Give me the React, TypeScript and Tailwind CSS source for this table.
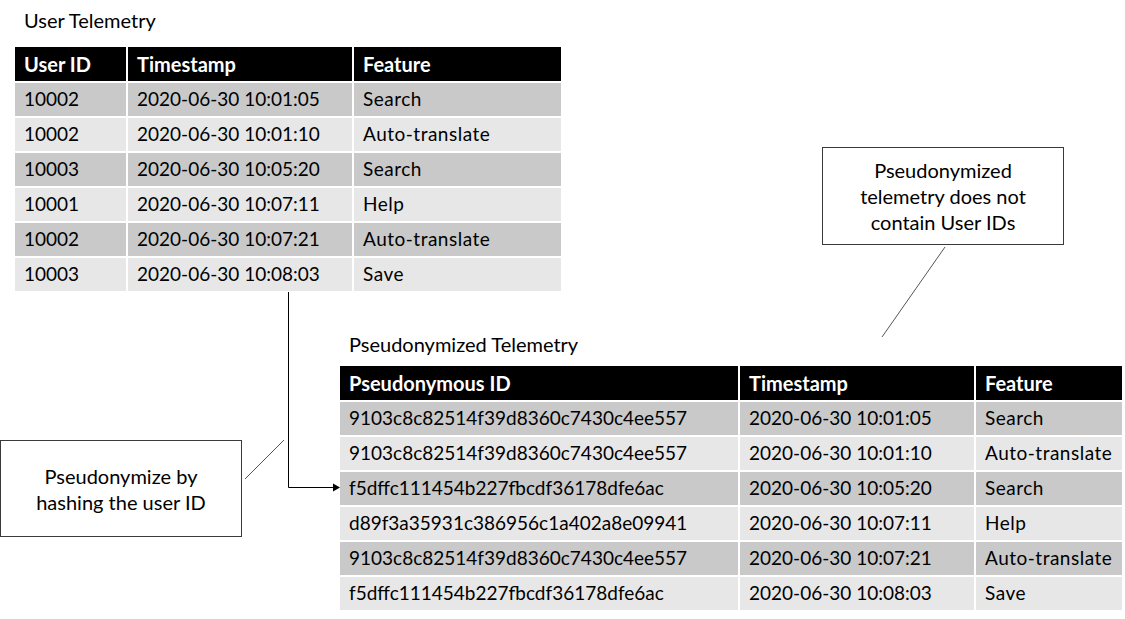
import React from "react";

type TableProps = {
  cols: string;
  headers: string[];
  rows: string[][];
};

const userRows = [
  ["10002", "2020-06-30 10:01:05", "Search"],
  ["10002", "2020-06-30 10:01:10", "Auto-translate"],
  ["10003", "2020-06-30 10:05:20", "Search"],
  ["10001", "2020-06-30 10:07:11", "Help"],
  ["10002", "2020-06-30 10:07:21", "Auto-translate"],
  ["10003", "2020-06-30 10:08:03", "Save"],
];

const pseudoRows = [
  ["9103c8c82514f39d8360c7430c4ee557", "2020-06-30 10:01:05", "Search"],
  ["9103c8c82514f39d8360c7430c4ee557", "2020-06-30 10:01:10", "Auto-translate"],
  ["f5dffc111454b227fbcdf36178dfe6ac", "2020-06-30 10:05:20", "Search"],
  ["d89f3a35931c386956c1a402a8e09941", "2020-06-30 10:07:11", "Help"],
  ["9103c8c82514f39d8360c7430c4ee557", "2020-06-30 10:07:21", "Auto-translate"],
  ["f5dffc111454b227fbcdf36178dfe6ac", "2020-06-30 10:08:03", "Save"],
];

// grey zebra table with black header, white hairlines between cells
const DataTable = ({ cols, headers, rows }: TableProps) => (
  <div className={`grid ${cols} gap-[2px] bg-white`}>
    {headers.map((h) => (
      <div key={h} className="h-[34px] bg-black px-[9px] flex items-center text-white font-bold text-[20px]">
        {h}
      </div>
    ))}
    {rows.map((row, i) =>
      row.map((cell, j) => (
        <div
          key={`${i}-${j}`}
          className={`h-[33px] px-[9px] flex items-center text-[19px] text-black ${
            j === 2 ? "tracking-[0.5px]" : ""
          } ${i % 2 === 0 ? "bg-[#c9c9c9]" : "bg-[#e7e7e7]"}`}
        >
          {cell}
        </div>
      ))
    )}
  </div>
);

const Callout = ({ lines, className }: { lines: string[]; className: string }) => (
  <div
    className={`shrink-0 w-[242px] border border-[#3a3a3a] bg-white flex flex-col items-center justify-center text-center text-[20px] leading-[26px] text-black ${className}`}
  >
    {lines.map((l) => (
      <span key={l}>{l}</span>
    ))}
  </div>
);

export default function App() {
  return (
    <div
      className="relative w-[1125px] h-[619px] bg-white overflow-hidden flex flex-col"
      style={{ fontFamily: "Lato, 'Open Sans', sans-serif" }}
    >
      {/* top: raw telemetry + note */}
      <div className="flex items-start pt-[7px]">
        <div className="ml-[15px] w-[546px] shrink-0 flex flex-col">
          <div className="pl-[9px] text-[20px] leading-[26px] text-black">User Telemetry</div>
          <div className="mt-[14px]">
            <DataTable
              cols="grid-cols-[111px_224px_207px]"
              headers={["User ID", "Timestamp", "Feature"]}
              rows={userRows}
            />
          </div>
        </div>
        <Callout
          className="ml-[261px] mt-[140px] h-[98px]"
          lines={["Pseudonymized", "telemetry does not", "contain User IDs"]}
        />
      </div>

      {/* bottom: note + pseudonymized telemetry */}
      <div className="flex items-start mt-[40px]">
        <Callout className="mt-[109px] h-[97px]" lines={["Pseudonymize by", "hashing the user ID"]} />
        <div className="ml-[98px] w-[782px] shrink-0 flex flex-col">
          <div className="pl-[9px] text-[20px] leading-[26px] text-black">Pseudonymized Telemetry</div>
          <div className="mt-[9px]">
            <DataTable
              cols="grid-cols-[398px_234px_146px]"
              headers={["Pseudonymous ID", "Timestamp", "Feature"]}
              rows={pseudoRows}
            />
          </div>
        </div>
      </div>

      {/* connectors */}
      <svg className="absolute inset-0 pointer-events-none" width="1125" height="619">
        <line x1="945" y1="247" x2="882" y2="337" stroke="#555" strokeWidth="1" />
        <line x1="245" y1="479" x2="284" y2="440" stroke="#555" strokeWidth="1" />
        <polyline points="288.5,292 288.5,487.5 333,487.5" fill="none" stroke="#000" strokeWidth="1" />
        <polygon points="333,483.5 340,487.5 333,491.5" fill="#000" />
      </svg>
    </div>
  );
}
